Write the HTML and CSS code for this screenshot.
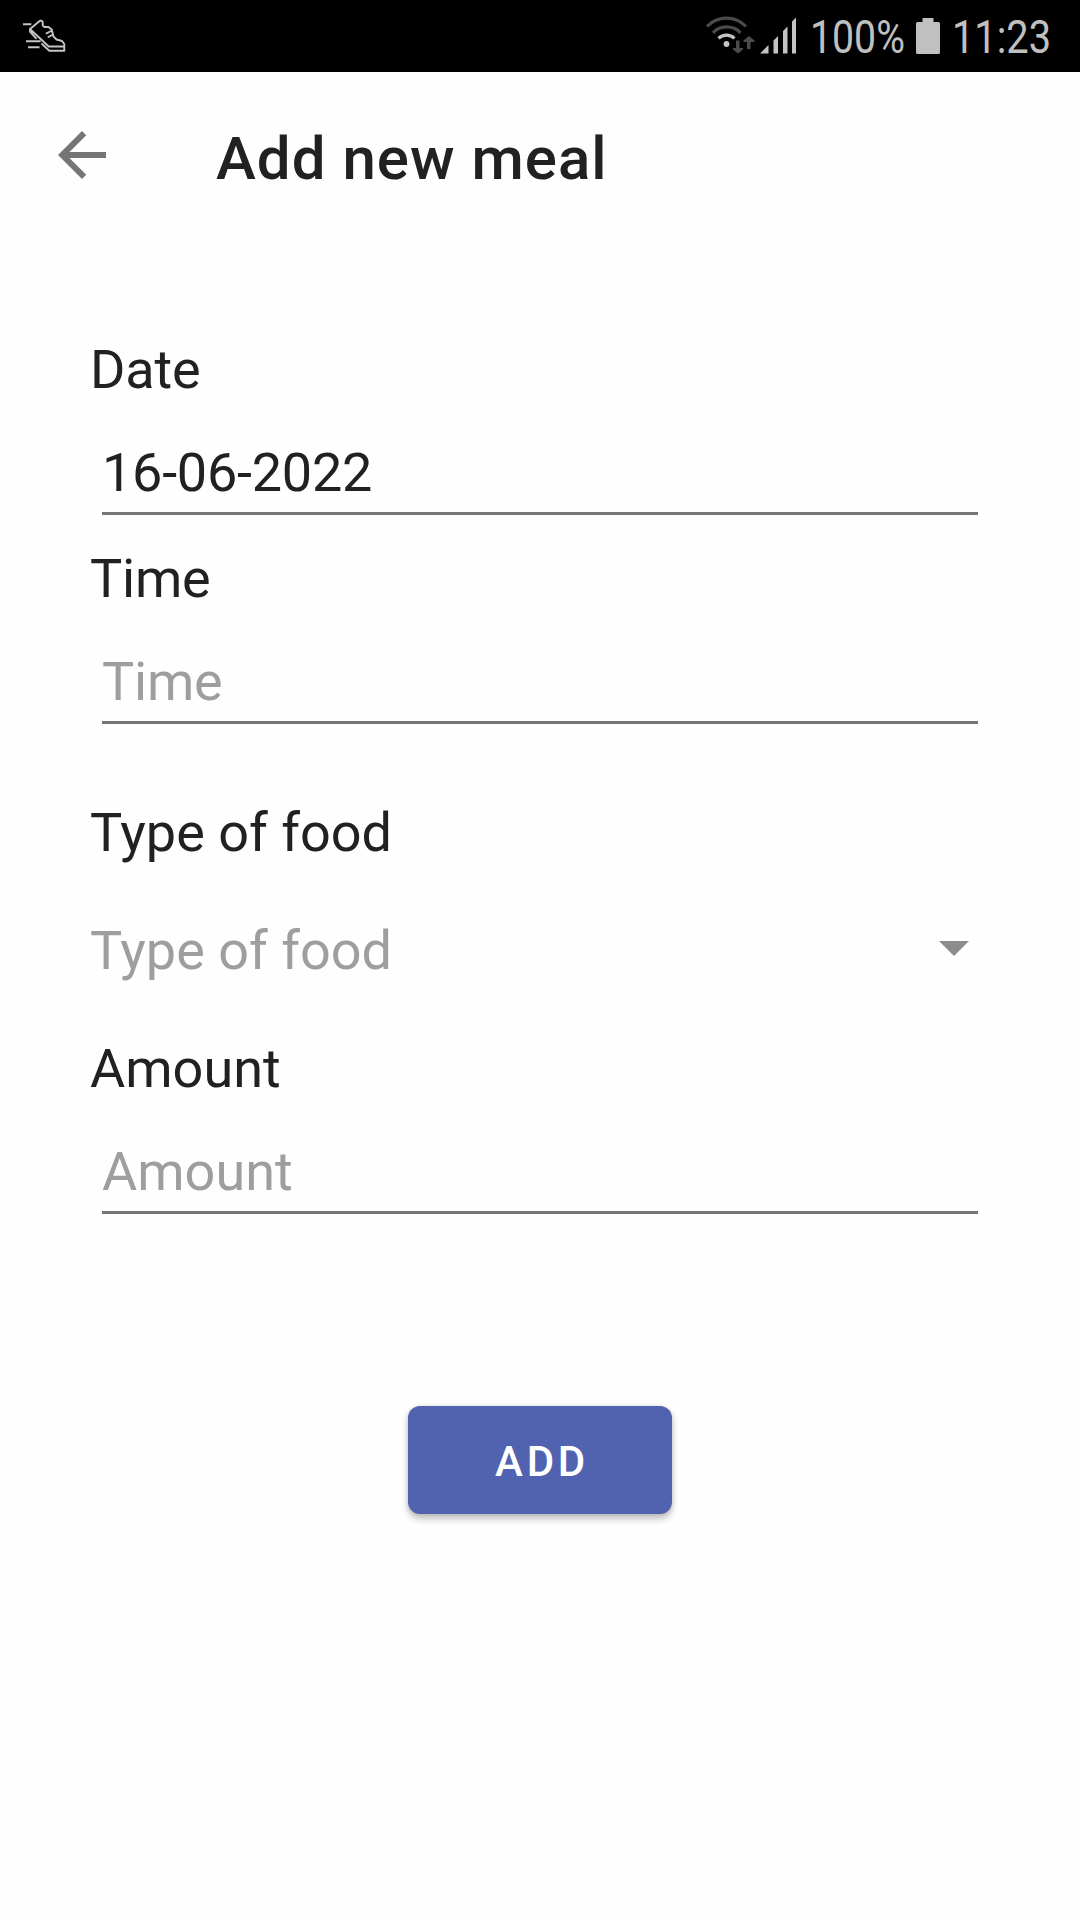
FILE: index.html
```html
<!DOCTYPE html>
<html lang="en">
<head>
<meta charset="utf-8">
<title>Add new meal</title>
<link rel="stylesheet" href="styles.css">
</head>
<body>
<header class="status">
  <svg class="status-shoe" width="48" height="38" viewBox="0 0 48 38" fill="none" stroke="#c4c4c4" stroke-width="1.9" stroke-linejoin="round" stroke-linecap="round">
    <path d="M1 8.300h8.300M4 25.300h14.700M6 31.300h11.500" stroke-linecap="butt"/>
    <path d="M14 22.300L8 15.500V13L18 4.700H19.500L20.700 6V9.500L22.500 11H26.500L29.700 13.500L31.500 20.500L34.500 23.500L40 25L42.300 28V34.700H27.300L20 28M8.500 13.500L26.700 30.500H42.300M24.500 17.300L29 15M26.500 21L31 18.500"/>
  </svg>
  <svg class="status-signal" width="94" height="42" viewBox="0 0 94 42">
    <g fill="none" stroke-width="3.200">
      <path d="M1 12.500A27 27 0 0 1 40 12.500M7 18.800A19 19 0 0 1 34.500 18.800" stroke="#4b4b4b"/>
      <path d="M12.500 24.300A11.500 11.500 0 0 1 28.500 24.300" stroke="#c4c4c4"/>
    </g>
    <circle cx="20.500" cy="30" r="2.900" fill="#c4c4c4"/>
    <path d="M30 26.500h3.500v7.500h3.500v1.500L32 39.500L27 35.500v-1.500h3zM41 35h3.500v-7H48.500v-1.500L43 22L37.500 26.500v1.500h3.500z" fill="#4b4b4b"/>
    <path d="M54 39.500L62.500 31V39.500zM67.500 26.500L72 22V39.500H67.500zM77 17L81.500 12.500V39.500H77zM86 7.500L90 3.500V39.500H86z" fill="#c4c4c4"/>
  </svg>
  <span class="status-text battery-level">100%</span>
  <svg class="status-battery" width="24" height="36" viewBox="0 0 24 36" fill="#c0c0c0">
    <path d="M6.500 0h11v4H22.500Q24 4 24 5.500V34.500Q24 36 22.500 36H1.500Q0 36 0 34.500V5.500Q0 4 1.500 4H6.500z"/>
  </svg>
  <span class="status-text">11:23</span>
</header>
<nav class="appbar">
  <svg class="back" width="72" height="72" viewBox="0 0 24 24" fill="#757575"><path d="M20 11H7.830l5.590-5.590L12 4l-8 8 8 8 1.410-1.410L7.830 13H20v-2z"/></svg>
  <h1 class="title">Add new meal</h1>
</nav>
<main class="form">
  <div class="label date-label">Date</div>
  <div class="input date">16-06-2022</div>
  <div class="label label-time">Time</div>
  <div class="input hint time">Time</div>
  <div class="label label-food">Type of food</div>
  <div class="select hint">
    <span>Type of food</span>
    <svg width="30" height="15" viewBox="0 0 30 15" fill="#8c8c8c"><path d="M0 0h30L15 15z"/></svg>
  </div>
  <div class="label">Amount</div>
  <div class="input hint">Amount</div>
  <button class="add" type="button">ADD</button>
</main>
</body>
</html>
```
FILE: styles.css
```css
* { box-sizing: border-box; }
body {
  margin: 0;
  width: 1080px;
  height: 1920px;
  overflow: hidden;
  background: #fefefe;
  color: #212121;
  font-family: Roboto, sans-serif;
}
.status {
  display: flex;
  height: 72px;
  padding-left: 22px;
  background: #000;
}
.status-shoe { margin-top: 16px; }
.status-signal { margin: 14px 10px 0 636px; }
.status-text {
  width: 110px;
  color: #c0c0c0;
  font-size: 46px;
  line-height: 74px;
  white-space: nowrap;
  transform: scaleX(.865);
  transform-origin: left center;
}
.battery-level { width: 106px; transform: scaleX(.853); }
.status-battery { margin: 18px 12px 0 0; }
.appbar {
  display: flex;
  height: 168px;
  padding: 47px 46px 0;
}
.title {
  margin: 0 0 0 98px;
  font-size: 60px;
  font-weight: 500;
  line-height: 80px;
  letter-spacing: 1.03px;
}
.form {
  display: flex;
  flex-direction: column;
  padding: 94px 90px 0;
  font-size: 54px;
  line-height: 72px;
}
.date-label { letter-spacing: -.2px; }
.label-time { margin-top: 28px; letter-spacing: -.2px; }
.label-food { margin-top: 73px; }
.input {
  margin: 0 12px;
  padding: 31px 0 3px;
  border-bottom: 3px solid #757575;
}
.date { letter-spacing: -.25px; }
.time { letter-spacing: -.2px; }
.select {
  display: flex;
  align-items: center;
  justify-content: space-between;
  margin: 46px 0;
  padding-right: 21px;
}
.select svg { margin-bottom: 5px; }
.hint { color: #9e9e9e; }
.add {
  align-self: center;
  width: 264px;
  height: 108px;
  margin-top: 192px;
  padding: 3px 0 0 4px;
  border: 0;
  border-radius: 12px;
  background: #5163b0;
  box-shadow: 0 5px 7px rgba(0, 0, 0, .24), 0 0 4px rgba(0, 0, 0, .12);
  color: #fff;
  font: 500 42px/105px Roboto, sans-serif;
  letter-spacing: 3.75px;
}
```
